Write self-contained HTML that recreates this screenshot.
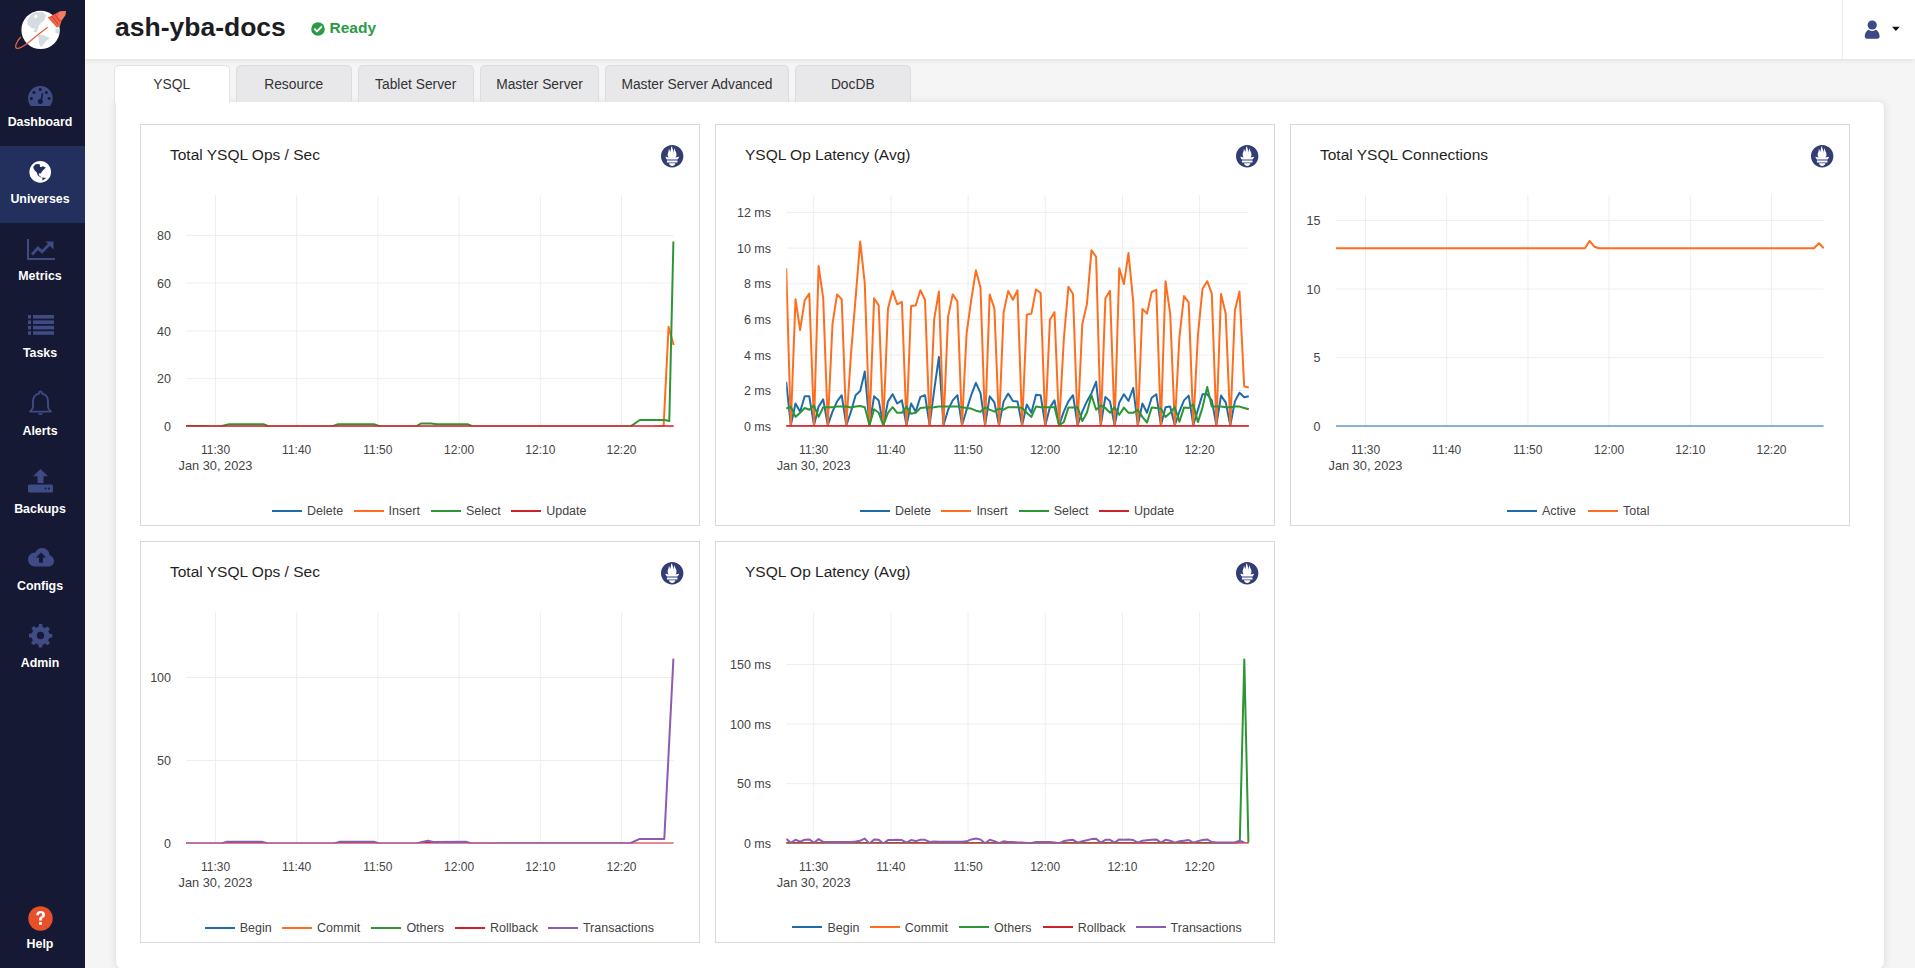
<!DOCTYPE html>
<html><head><meta charset="utf-8"><title>ash-yba-docs</title>
<style>
html,body{margin:0;padding:0;}
body{width:1915px;height:968px;overflow:hidden;position:relative;background:#f5f5f5;font-family:"Liberation Sans", sans-serif;}
#side{position:absolute;left:0;top:0;width:85px;height:968px;background:#161934;}
#side .active{position:absolute;left:0;top:146px;width:85px;height:77px;background:#23305d;}
.slabel{position:absolute;left:-45px;width:170px;text-align:center;color:#fff;font-weight:bold;font-size:12.4px;line-height:14px;}
#header{position:absolute;left:85px;top:0;width:1830px;height:59px;background:#fff;box-shadow:0 1px 6px rgba(0,0,0,0.10);}
#title{position:absolute;left:115px;top:12px;font-size:26.5px;font-weight:bold;color:#1c1c22;line-height:30px;letter-spacing:0px;}
#ready{position:absolute;left:329.5px;top:18px;font-size:15.5px;font-weight:bold;color:#2c9a45;line-height:20px;}
#divider{position:absolute;left:1842px;top:0;width:1px;height:59px;background:#ececec;}
#panel{position:absolute;left:115px;top:102px;width:1768px;height:867px;background:#fff;border:1px solid #e4e4ea;border-top:none;border-radius:0 6px 8px 8px;box-shadow:0 0 9px rgba(0,0,0,0.09);}
.tab{position:absolute;top:65px;height:37px;box-sizing:border-box;background:#e8e8eb;border:1px solid #dcdce0;border-bottom:none;border-radius:5px 5px 0 0;text-align:center;font-size:13.8px;line-height:37px;color:#333;}
.tab.active{background:#fff;border-color:#e2e2e6;height:38px;z-index:2;}
.card{position:absolute;width:558px;height:400px;border:1px solid #d9d9dd;background:#fff;}
.ctitle{position:absolute;font-size:15.5px;line-height:20px;color:#1f1f24;white-space:nowrap;}
.ytick{position:absolute;font-size:12.5px;line-height:16px;color:#444;white-space:nowrap;text-align:right;}
.xtick{position:absolute;width:80px;text-align:center;font-size:12px;line-height:16px;color:#444;white-space:nowrap;}
.lline{position:absolute;width:30px;height:2px;}
.ltext{position:absolute;font-size:12.5px;line-height:16px;color:#444;white-space:nowrap;}
svg{overflow:visible;}
</style></head><body>
<div id="side"><div class="active"></div>
<svg style="position:absolute;left:0;top:0" width="85" height="60" viewBox="0 0 85 60">
<circle cx="40.6" cy="29.9" r="19.2" fill="#fff"/>
<path d="M27 20.5L30.6 15.3 34.8 12.2 43 12.2 46.1 15.3 44.1 20.5 41 23.1 38.9 25.6 37.9 28.7 36.8 32.4 33.7 31.8 31.7 28.2 27.6 24.6Z" fill="#d5dce1"/>
<circle cx="35.8" cy="16.4" r="1.6" fill="#fff"/><circle cx="33.4" cy="29.2" r="1.2" fill="#fff"/>
<path d="M37.9 33.9L43 34.9 49.8 38 45.1 42.2 41 47.3 39.4 44.2 38.4 38.6Z" fill="#d5dce1"/>
<path d="M55.4 28.7L59 29.3 58.5 33.9 55.4 32.9Z" fill="#d5dce1"/>
<path d="M47.7 17.4L54.4 14.3 59.6 11.5 66 10.9 65.2 15.3 61.6 20.5 60.1 25.7 57 27.7Z" fill="#ec6347"/>
<path d="M59.6 11.5L66 10.9 65.2 15.3 61.6 20.5 57.5 16.5Z" fill="#f27d63"/>
<path d="M51.5 16l6.5 8.2M54.5 14.2l5.6 7.4" stroke="#d94b30" stroke-width="1.1" fill="none"/>
<path d="M47.7 27.2C41 32 33 38.5 27.6 43.2 23 46.5 19 48.8 17 48.4 14.2 47.8 16 42 20.8 37" stroke="#e8603f" stroke-width="1.3" fill="none"/>
</svg>
<div class="slabel" style="top:115.3px">Dashboard</div><svg style="position:absolute;left:27px;top:85px" width="27" height="23" viewBox="0 0 27 23"><path d="M3.65 20.9A12.35 12.35 0 1 1 23.05 20.9Z" fill="#3f4b84"/><circle cx="13.2" cy="4.6" r="1.5" fill="#161934"/><circle cx="7" cy="7.4" r="1.5" fill="#161934"/><circle cx="19.4" cy="7.4" r="1.5" fill="#161934"/><circle cx="4.4" cy="13.6" r="1.5" fill="#161934"/><circle cx="22.2" cy="13.6" r="1.5" fill="#161934"/><path d="M14.8 8.2l1.5.3-1.6 8.6-1.6-.3z" fill="#161934"/><circle cx="13.3" cy="16.6" r="2.5" fill="#161934"/></svg><div class="slabel" style="top:192.3px">Universes</div><svg style="position:absolute;left:29px;top:160px" width="23" height="23" viewBox="0 0 23 23"><circle cx="11.2" cy="11.9" r="10.8" fill="#fff"/><path d="M4.2 7.1L6.5 4.3 10.3 4 10.9 5.2 12.1 7.1 13.7 6.2 16.8 7.4 14.9 9.6 12.7 11.7 12.1 13.6 10.5 13.3 9.6 14.2 10.6 16.1 12.7 17.3 11.8 17.5 8.8 15.4 7.8 12.4 5.3 9.9Z" fill="#23305d"/><circle cx="11.8" cy="6" r="1" fill="#fff"/><path d="M13.2 17.6L17.1 18 13.6 20.6Z" fill="#23305d"/></svg><div class="slabel" style="top:269.3px">Metrics</div><svg style="position:absolute;left:27px;top:238px" width="29" height="22" viewBox="0 0 29 22"><path d="M1 1v20h27" fill="none" stroke="#3f4b84" stroke-width="2"/><path d="M5 16.5l6-6.5 4 3.8 8-8" fill="none" stroke="#3f4b84" stroke-width="2.8"/><path d="M18.5 3.5h8v8z" fill="#3f4b84"/></svg><div class="slabel" style="top:346.2px">Tasks</div><svg style="position:absolute;left:27.5px;top:315px" width="26" height="20" viewBox="0 0 26 20"><rect x="0" y="0" width="3" height="3.6" fill="#3f4b84"/><rect x="5" y="0" width="21" height="3.6" fill="#3f4b84"/><rect x="0" y="5.4" width="3" height="3.6" fill="#3f4b84"/><rect x="5" y="5.4" width="21" height="3.6" fill="#3f4b84"/><rect x="0" y="10.8" width="3" height="3.6" fill="#3f4b84"/><rect x="5" y="10.8" width="21" height="3.6" fill="#3f4b84"/><rect x="0" y="16.2" width="3" height="3.6" fill="#3f4b84"/><rect x="5" y="16.2" width="21" height="3.6" fill="#3f4b84"/></svg><div class="slabel" style="top:423.6px">Alerts</div><svg style="position:absolute;left:28px;top:390px" width="25" height="27" viewBox="0 0 25 27"><path d="M12.5 1.5c-.9 0-1.5.6-1.5 1.5v.6C7.3 4.4 5 7.5 5 11.3v5.4c0 1.6-1.2 3.3-3 4.9h21c-1.8-1.6-3-3.3-3-4.9v-5.4c0-3.8-2.3-6.9-6-7.7V3c0-.9-.6-1.5-1.5-1.5z" fill="none" stroke="#3f4b84" stroke-width="1.9" stroke-linejoin="round"/><path d="M10 23.2a2.6 2.6 0 0 0 5 0z" fill="#3f4b84"/></svg><div class="slabel" style="top:501.8px">Backups</div><svg style="position:absolute;left:28px;top:469px" width="25" height="24" viewBox="0 0 25 24"><path d="M12.5 0l7.5 7.2h-4.5v6.8h-6V7.2H5z" fill="#3f4b84"/><rect x="0" y="15.5" width="25" height="8" rx="1.5" fill="#3f4b84"/><circle cx="17.5" cy="19.5" r=".9" fill="#161934"/><circle cx="20.8" cy="19.5" r=".9" fill="#161934"/></svg><div class="slabel" style="top:578.6px">Configs</div><svg style="position:absolute;left:26.5px;top:547px" width="28" height="20" viewBox="0 0 28 20"><path d="M22.6 8.3C22.4 3.9 19.2 1 15.2 1c-3.1 0-5.7 1.8-6.8 4.4C4.5 5.3 1 8.3 1 12.3 1 16.5 4.1 19.5 8 19.5h13.6c3 0 5.4-2.4 5.4-5.5 0-2.7-1.9-5.2-4.4-5.7z" fill="#3f4b84"/><path d="M14 5.5l5 5h-3.1v5.2h-3.8v-5.2H9z" fill="#161934"/></svg><div class="slabel" style="top:655.6px">Admin</div><svg style="position:absolute;left:29px;top:624px" width="23" height="23" viewBox="0 0 24 24"><path d="M10.3 0h3.4l.6 3.2c.9.3 1.7.6 2.4 1.1l2.7-1.8 2.4 2.4-1.8 2.7c.5.7.9 1.6 1.1 2.4l3.2.6v3.4l-3.2.6c-.3.9-.6 1.7-1.1 2.4l1.8 2.7-2.4 2.4-2.7-1.8c-.7.5-1.6.9-2.4 1.1l-.6 3.2h-3.4l-.6-3.2c-.9-.3-1.7-.6-2.4-1.1l-2.7 1.8-2.4-2.4 1.8-2.7c-.5-.7-.9-1.6-1.1-2.4L0 13.7v-3.4l3.2-.6c.3-.9.6-1.7 1.1-2.4L2.5 4.6l2.4-2.4 2.7 1.8c.7-.5 1.6-.9 2.4-1.1z" fill="#3f4b84"/><circle cx="12" cy="12" r="3.8" fill="#161934"/></svg>
<svg style="position:absolute;left:27.5px;top:905.5px" width="25" height="25" viewBox="0 0 25 25">
<circle cx="12.5" cy="12.5" r="12.2" fill="#e8502a"/>
<path d="M8.3 9.2c0-2.6 1.8-4.2 4.3-4.2 2.6 0 4.4 1.5 4.4 3.8 0 1.7-.9 2.5-2.1 3.3-.8.5-1.1.9-1.1 1.7v.6h-2.7v-.8c0-1.5.5-2.3 1.7-3.1.9-.6 1.4-1 1.4-1.8 0-.9-.7-1.4-1.6-1.4-1 0-1.6.7-1.6 1.9z" fill="#fff"/>
<rect x="11.1" y="16" width="2.8" height="2.8" fill="#fff"/>
</svg>
<div class="slabel" style="top:937px">Help</div>
</div>
<div id="header"></div>
<div id="title">ash-yba-docs</div>
<svg style="position:absolute;left:310.5px;top:21.5px" width="14" height="14" viewBox="0 0 14 14">
<circle cx="7" cy="7" r="6.8" fill="#2c9a45"/>
<path d="M3.8 7.2l2.2 2.2 4.3-4.4" stroke="#fff" stroke-width="1.9" fill="none" stroke-linecap="round" stroke-linejoin="round"/>
</svg>
<div id="ready">Ready</div>
<div id="divider"></div>
<svg style="position:absolute;left:1863px;top:19px" width="40" height="22" viewBox="0 0 40 22">
<circle cx="9.2" cy="6" r="4.6" fill="#3a4a84"/>
<path d="M1.8 17.5c0-3.7 2.1-6.3 4-6.8 1 .8 2.1 1.2 3.4 1.2s2.4-.4 3.4-1.2c1.9.5 4 3.1 4 6.8 0 1.4-.8 2.2-2.2 2.2H4c-1.4 0-2.2-.8-2.2-2.2z" fill="#3a4a84"/>
<path d="M29 7.8h7.8l-3.9 4.3z" fill="#111"/>
</svg>
<div id="panel"></div>
<div class="tab active" style="left:114px;width:115.5px">YSQL</div><div class="tab" style="left:236px;width:115.5px">Resource</div><div class="tab" style="left:358px;width:115.5px">Tablet Server</div><div class="tab" style="left:480px;width:119px">Master Server</div><div class="tab" style="left:605px;width:184px">Master Server Advanced</div><div class="tab" style="left:795px;width:115.5px">DocDB</div>
<div class="card" style="left:140px;top:124px"></div>
<div class="ctitle" style="left:170px;top:144.8px">Total YSQL Ops / Sec</div>
<svg style="position:absolute;left:660.8px;top:144.8px" width="22.4" height="22.4" viewBox="0 0 24 24"><path fill="#323d74" d="M12 0C5.373 0 0 5.372 0 12c0 6.627 5.373 12 12 12s12-5.373 12-12c0-6.628-5.373-12-12-12zm0 22.46c-1.885 0-3.414-1.26-3.414-2.814h6.828c0 1.553-1.528 2.813-3.414 2.813zm5.64-3.745H6.36v-2.046h11.28v2.046zm-.04-3.098H6.391c-.037-.043-.075-.086-.111-.13-1.155-1.401-1.427-2.133-1.69-2.879-.005-.025 1.4.287 2.395.511 0 0 .513.119 1.262.255-.72-.843-1.147-1.915-1.147-3.01 0-2.406 1.845-4.508 1.18-6.207.648.052 1.34 1.367 1.387 3.422.689-.951.977-2.69.977-3.755 0-1.103.727-2.385 1.454-2.429-.648 1.069.168 1.984.894 4.256.272.854.237 2.29.447 3.201.07-1.892.395-4.652 1.595-5.605-.529 1.2.079 2.702.494 3.424.671 1.164 1.078 2.047 1.078 3.716a4.642 4.642 0 01-1.11 2.996c.792-.149 1.34-.283 1.34-.283l2.573-.502s-.374 1.538-1.81 3.019z"/></svg>
<svg class="plot" width="1915" height="968" style="position:absolute;left:0;top:0">
<line x1="215.5" y1="195" x2="215.5" y2="426.4" stroke="#eeeeee" stroke-width="1"/>
<line x1="296.7" y1="195" x2="296.7" y2="426.4" stroke="#eeeeee" stroke-width="1"/>
<line x1="377.9" y1="195" x2="377.9" y2="426.4" stroke="#eeeeee" stroke-width="1"/>
<line x1="459.1" y1="195" x2="459.1" y2="426.4" stroke="#eeeeee" stroke-width="1"/>
<line x1="540.3" y1="195" x2="540.3" y2="426.4" stroke="#eeeeee" stroke-width="1"/>
<line x1="621.5" y1="195" x2="621.5" y2="426.4" stroke="#eeeeee" stroke-width="1"/>
<line x1="186" y1="426.4" x2="673.6" y2="426.4" stroke="#eeeeee" stroke-width="1"/>
<line x1="186" y1="378.6" x2="673.6" y2="378.6" stroke="#eeeeee" stroke-width="1"/>
<line x1="186" y1="330.9" x2="673.6" y2="330.9" stroke="#eeeeee" stroke-width="1"/>
<line x1="186" y1="283.1" x2="673.6" y2="283.1" stroke="#eeeeee" stroke-width="1"/>
<line x1="186" y1="235.4" x2="673.6" y2="235.4" stroke="#eeeeee" stroke-width="1"/>
<defs><clipPath id="clip140_124"><rect x="186" y="155" width="489.6" height="271.5"/></clipPath></defs><g clip-path="url(#clip140_124)">
<polyline points="655,426.4 663.6,426.4 668.6,326.8 673.6,345" fill="none" stroke="#ff6e1e" stroke-width="2" stroke-linejoin="round" stroke-linecap="butt"/>
<polyline points="186,426.1 205,426.1 210,426.4 220,426.4 229,424.3 264,424.3 269,426.4 332,426.4 338,424.3 374,424.3 380,426.4 416,426.4 421,423.5 431,423.5 437,424.3 468,424.3 473,426.4 630.7,426.4 639.8,420 664.8,420 669.3,421 673.4,241.6" fill="none" stroke="#2b9633" stroke-width="2" stroke-linejoin="round" stroke-linecap="butt"/>
<polyline points="186,426.4 673.6,426.4" fill="none" stroke="#d0202a" stroke-width="2" stroke-linejoin="round" stroke-linecap="butt"/>
<polyline points="186,426.4 673.6,426.4" fill="none" stroke="#d0202a" stroke-width="2" stroke-linejoin="round" stroke-linecap="butt"/>
</g>
</svg>
<div class="ytick" style="right:1744px;top:419px">0</div>
<div class="ytick" style="right:1744px;top:371.2px">20</div>
<div class="ytick" style="right:1744px;top:323.5px">40</div>
<div class="ytick" style="right:1744px;top:275.8px">60</div>
<div class="ytick" style="right:1744px;top:228px">80</div>
<div class="xtick" style="left:175.5px;top:441.9px">11:30</div>
<div class="xtick" style="left:256.7px;top:441.9px">11:40</div>
<div class="xtick" style="left:337.9px;top:441.9px">11:50</div>
<div class="xtick" style="left:419.1px;top:441.9px">12:00</div>
<div class="xtick" style="left:500.3px;top:441.9px">12:10</div>
<div class="xtick" style="left:581.5px;top:441.9px">12:20</div>
<div class="xtick" style="left:165.5px;width:100px;top:457.9px;font-size:12.8px">Jan 30, 2023</div>
<div class="lline" style="left:272.1px;top:509.5px;background:#1f6cab"></div>
<div class="ltext" style="left:307.1px;top:502.6px">Delete</div>
<div class="lline" style="left:353.6px;top:509.5px;background:#ff6e1e"></div>
<div class="ltext" style="left:388.6px;top:502.6px">Insert</div>
<div class="lline" style="left:430.9px;top:509.5px;background:#2b9633"></div>
<div class="ltext" style="left:465.9px;top:502.6px">Select</div>
<div class="lline" style="left:511.2px;top:509.5px;background:#d0202a"></div>
<div class="ltext" style="left:546.2px;top:502.6px">Update</div><div class="card" style="left:715px;top:124px"></div>
<div class="ctitle" style="left:745px;top:144.8px">YSQL Op Latency (Avg)</div>
<svg style="position:absolute;left:1235.8px;top:144.8px" width="22.4" height="22.4" viewBox="0 0 24 24"><path fill="#323d74" d="M12 0C5.373 0 0 5.372 0 12c0 6.627 5.373 12 12 12s12-5.373 12-12c0-6.628-5.373-12-12-12zm0 22.46c-1.885 0-3.414-1.26-3.414-2.814h6.828c0 1.553-1.528 2.813-3.414 2.813zm5.64-3.745H6.36v-2.046h11.28v2.046zm-.04-3.098H6.391c-.037-.043-.075-.086-.111-.13-1.155-1.401-1.427-2.133-1.69-2.879-.005-.025 1.4.287 2.395.511 0 0 .513.119 1.262.255-.72-.843-1.147-1.915-1.147-3.01 0-2.406 1.845-4.508 1.18-6.207.648.052 1.34 1.367 1.387 3.422.689-.951.977-2.69.977-3.755 0-1.103.727-2.385 1.454-2.429-.648 1.069.168 1.984.894 4.256.272.854.237 2.29.447 3.201.07-1.892.395-4.652 1.595-5.605-.529 1.2.079 2.702.494 3.424.671 1.164 1.078 2.047 1.078 3.716a4.642 4.642 0 01-1.11 2.996c.792-.149 1.34-.283 1.34-.283l2.573-.502s-.374 1.538-1.81 3.019z"/></svg>
<svg class="plot" width="1915" height="968" style="position:absolute;left:0;top:0">
<line x1="813.7" y1="195" x2="813.7" y2="426.4" stroke="#eeeeee" stroke-width="1"/>
<line x1="890.9" y1="195" x2="890.9" y2="426.4" stroke="#eeeeee" stroke-width="1"/>
<line x1="968.1" y1="195" x2="968.1" y2="426.4" stroke="#eeeeee" stroke-width="1"/>
<line x1="1045.2" y1="195" x2="1045.2" y2="426.4" stroke="#eeeeee" stroke-width="1"/>
<line x1="1122.4" y1="195" x2="1122.4" y2="426.4" stroke="#eeeeee" stroke-width="1"/>
<line x1="1199.6" y1="195" x2="1199.6" y2="426.4" stroke="#eeeeee" stroke-width="1"/>
<line x1="786.2" y1="426.4" x2="1248.8" y2="426.4" stroke="#eeeeee" stroke-width="1"/>
<line x1="786.2" y1="390.7" x2="1248.8" y2="390.7" stroke="#eeeeee" stroke-width="1"/>
<line x1="786.2" y1="355.1" x2="1248.8" y2="355.1" stroke="#eeeeee" stroke-width="1"/>
<line x1="786.2" y1="319.4" x2="1248.8" y2="319.4" stroke="#eeeeee" stroke-width="1"/>
<line x1="786.2" y1="283.8" x2="1248.8" y2="283.8" stroke="#eeeeee" stroke-width="1"/>
<line x1="786.2" y1="248.1" x2="1248.8" y2="248.1" stroke="#eeeeee" stroke-width="1"/>
<line x1="786.2" y1="212.4" x2="1248.8" y2="212.4" stroke="#eeeeee" stroke-width="1"/>
<defs><clipPath id="clip715_124"><rect x="786.2" y="155" width="464.6" height="271.5"/></clipPath></defs><g clip-path="url(#clip715_124)">
<polyline points="786.2,381.8 790.8,425.2 795.5,403.5 800.1,411.7 804.7,396.3 809.3,396.3 814,425.2 818.6,406.6 823.2,399.4 827.8,425.2 832.5,411.7 837.1,401.4 841.7,395.2 846.3,425.2 851,411.7 855.6,395.2 860.2,391.1 864.8,371.5 869.5,425.2 874.1,396.3 878.7,400.4 883.3,425.2 888,401.4 892.6,394.2 897.2,403.5 901.9,400.4 906.5,425.2 911.1,403.5 915.7,411.7 920.4,396.9 925,395.2 929.6,425.2 934.2,390.1 938.9,357 943.5,425.2 948.1,409.7 952.7,400.4 957.4,395.2 962,425.2 966.6,409.7 971.2,395.2 975.9,382.8 980.5,393.2 985.1,425.2 989.7,396.3 994.4,402.4 999,425.2 1003.6,401.4 1008.2,393.6 1012.9,401 1017.5,401.4 1022.1,425.2 1026.8,404.5 1031.4,412.8 1036,394.8 1040.6,395.2 1045.3,425.2 1049.9,407.6 1054.5,400.4 1059.1,425.2 1063.8,411.7 1068.4,401.4 1073,395.2 1077.6,425.2 1082.3,411.7 1086.9,401.4 1091.5,393.2 1096.1,381.8 1100.8,425.2 1105.4,396.9 1110,401.4 1114.6,425.2 1119.3,402.4 1123.9,394.2 1128.5,401 1133.2,388 1137.8,425.2 1142.4,403.5 1147,412.8 1151.7,397.7 1156.3,394.2 1160.9,425.2 1165.5,407.2 1170.2,406.6 1174.8,425.2 1179.4,411.7 1184,400.4 1188.7,395.6 1193.3,425.2 1197.9,409.7 1202.5,394.2 1207.2,394.2 1211.8,400.4 1216.4,425.2 1221,395.6 1225.7,402.4 1230.3,425.2 1234.9,401.4 1239.5,392.7 1244.2,397.3 1248.8,396.3" fill="none" stroke="#1f6cab" stroke-width="2" stroke-linejoin="round" stroke-linecap="butt"/>
<polyline points="786.2,268.2 790.8,425.2 795.5,299.2 800.1,330.2 804.7,300.2 809.3,293.6 814,425.2 818.6,266.1 823.2,298.2 827.8,425.2 832.5,324 837.1,294.4 841.7,299.2 846.3,425.2 851,353.9 855.6,298.2 860.2,241.4 864.8,283.7 869.5,425.2 874.1,298.2 878.7,305.4 883.3,425.2 888,308.5 892.6,290.9 897.2,304.3 901.9,301.9 906.5,425.2 911.1,306 915.7,305.4 920.4,290.3 925,299.8 929.6,425.2 934.2,318.8 938.9,291.5 943.5,425.2 948.1,316.7 952.7,294.4 957.4,301.3 962,425.2 966.6,333.3 971.2,300.2 975.9,270.3 980.5,287.8 985.1,425.2 989.7,294.4 994.4,308.5 999,425.2 1003.6,312.6 1008.2,290.9 1012.9,299.8 1017.5,290.3 1022.1,425.2 1026.8,314.7 1031.4,313.6 1036,289.5 1040.6,293 1045.3,425.2 1049.9,319.8 1054.5,312.2 1059.1,425.2 1063.8,339.5 1068.4,286.8 1073,294 1077.6,425.2 1082.3,324 1086.9,304.3 1091.5,250.2 1096.1,256.8 1100.8,425.2 1105.4,298.2 1110,290.9 1114.6,425.2 1119.3,268.2 1123.9,284.1 1128.5,253.1 1133.2,301.3 1137.8,425.2 1142.4,308.9 1147,313.6 1151.7,292 1156.3,289.9 1160.9,425.2 1165.5,281.2 1170.2,313.6 1174.8,425.2 1179.4,337.4 1184,296.1 1188.7,302.3 1193.3,425.2 1197.9,335.3 1202.5,288.9 1207.2,281.2 1211.8,293.6 1216.4,425.2 1221,294 1225.7,313.6 1230.3,425.2 1234.9,310.5 1239.5,291.5 1244.2,386.5 1248.8,387.4" fill="none" stroke="#ff6e1e" stroke-width="2" stroke-linejoin="round" stroke-linecap="butt"/>
<polyline points="786.2,408.6 790.8,406.6 795.5,416.9 800.1,412.8 804.7,408 809.3,409.7 814,405.5 818.6,416.9 823.2,407.2 827.8,407.2 832.5,407.2 837.1,406.6 841.7,406.6 846.3,406.6 851,407.6 855.6,406.6 860.2,406 864.8,407.2 869.5,425.2 874.1,409.3 878.7,412.8 883.3,425.2 888,412.8 892.6,407.2 897.2,412.8 901.9,412.8 906.5,406.6 911.1,413.8 915.7,412.8 920.4,408 925,407.6 929.6,407.6 934.2,407.2 938.9,406.6 943.5,406.6 948.1,406.6 952.7,406.6 957.4,406.6 962,407.2 966.6,408 971.2,408.6 975.9,410.7 980.5,411.7 985.1,407.6 989.7,409.7 994.4,411.7 999,408.6 1003.6,409.7 1008.2,407.2 1012.9,407.2 1017.5,407.2 1022.1,408 1026.8,412.8 1031.4,416.9 1036,406.6 1040.6,407.2 1045.3,407.2 1049.9,407.2 1054.5,407.2 1059.1,425.2 1063.8,422.1 1068.4,407.6 1073,407.6 1077.6,407.2 1082.3,421 1086.9,412.8 1091.5,395.2 1096.1,409.7 1100.8,405.5 1105.4,408 1110,412.8 1114.6,407.2 1119.3,414.8 1123.9,407.6 1128.5,412.8 1133.2,412.8 1137.8,409.7 1142.4,416.9 1147,422.5 1151.7,407.6 1156.3,408 1160.9,408.6 1165.5,416.9 1170.2,412.8 1174.8,407.2 1179.4,421.7 1184,407.6 1188.7,408 1193.3,404.5 1197.9,422.1 1202.5,407.6 1207.2,387 1211.8,406.6 1216.4,406.6 1221,406.6 1225.7,407.2 1230.3,407.2 1234.9,406.6 1239.5,406.6 1244.2,408 1248.8,409.3" fill="none" stroke="#2b9633" stroke-width="2" stroke-linejoin="round" stroke-linecap="butt"/>
<polyline points="786.2,426.2 1248.8,426.2" fill="none" stroke="#d0202a" stroke-width="2" stroke-linejoin="round" stroke-linecap="butt"/>
<polyline points="786.2,426.2 1248.8,426.2" fill="none" stroke="#d0202a" stroke-width="2" stroke-linejoin="round" stroke-linecap="butt"/>
</g>
</svg>
<div class="ytick" style="right:1144px;top:419px">0 ms</div>
<div class="ytick" style="right:1144px;top:383.3px">2 ms</div>
<div class="ytick" style="right:1144px;top:347.7px">4 ms</div>
<div class="ytick" style="right:1144px;top:312px">6 ms</div>
<div class="ytick" style="right:1144px;top:276.4px">8 ms</div>
<div class="ytick" style="right:1144px;top:240.7px">10 ms</div>
<div class="ytick" style="right:1144px;top:205px">12 ms</div>
<div class="xtick" style="left:773.7px;top:441.9px">11:30</div>
<div class="xtick" style="left:850.9px;top:441.9px">11:40</div>
<div class="xtick" style="left:928.1px;top:441.9px">11:50</div>
<div class="xtick" style="left:1005.2px;top:441.9px">12:00</div>
<div class="xtick" style="left:1082.4px;top:441.9px">12:10</div>
<div class="xtick" style="left:1159.6px;top:441.9px">12:20</div>
<div class="xtick" style="left:763.7px;width:100px;top:457.9px;font-size:12.8px">Jan 30, 2023</div>
<div class="lline" style="left:859.9px;top:509.5px;background:#1f6cab"></div>
<div class="ltext" style="left:894.9px;top:502.6px">Delete</div>
<div class="lline" style="left:941.4px;top:509.5px;background:#ff6e1e"></div>
<div class="ltext" style="left:976.4px;top:502.6px">Insert</div>
<div class="lline" style="left:1018.6px;top:509.5px;background:#2b9633"></div>
<div class="ltext" style="left:1053.7px;top:502.6px">Select</div>
<div class="lline" style="left:1099px;top:509.5px;background:#d0202a"></div>
<div class="ltext" style="left:1134px;top:502.6px">Update</div><div class="card" style="left:1290px;top:124px"></div>
<div class="ctitle" style="left:1320px;top:144.8px">Total YSQL Connections</div>
<svg style="position:absolute;left:1810.8px;top:144.8px" width="22.4" height="22.4" viewBox="0 0 24 24"><path fill="#323d74" d="M12 0C5.373 0 0 5.372 0 12c0 6.627 5.373 12 12 12s12-5.373 12-12c0-6.628-5.373-12-12-12zm0 22.46c-1.885 0-3.414-1.26-3.414-2.814h6.828c0 1.553-1.528 2.813-3.414 2.813zm5.64-3.745H6.36v-2.046h11.28v2.046zm-.04-3.098H6.391c-.037-.043-.075-.086-.111-.13-1.155-1.401-1.427-2.133-1.69-2.879-.005-.025 1.4.287 2.395.511 0 0 .513.119 1.262.255-.72-.843-1.147-1.915-1.147-3.01 0-2.406 1.845-4.508 1.18-6.207.648.052 1.34 1.367 1.387 3.422.689-.951.977-2.69.977-3.755 0-1.103.727-2.385 1.454-2.429-.648 1.069.168 1.984.894 4.256.272.854.237 2.29.447 3.201.07-1.892.395-4.652 1.595-5.605-.529 1.2.079 2.702.494 3.424.671 1.164 1.078 2.047 1.078 3.716a4.642 4.642 0 01-1.11 2.996c.792-.149 1.34-.283 1.34-.283l2.573-.502s-.374 1.538-1.81 3.019z"/></svg>
<svg class="plot" width="1915" height="968" style="position:absolute;left:0;top:0">
<line x1="1365.5" y1="195" x2="1365.5" y2="426.4" stroke="#eeeeee" stroke-width="1"/>
<line x1="1446.7" y1="195" x2="1446.7" y2="426.4" stroke="#eeeeee" stroke-width="1"/>
<line x1="1527.9" y1="195" x2="1527.9" y2="426.4" stroke="#eeeeee" stroke-width="1"/>
<line x1="1609.1" y1="195" x2="1609.1" y2="426.4" stroke="#eeeeee" stroke-width="1"/>
<line x1="1690.3" y1="195" x2="1690.3" y2="426.4" stroke="#eeeeee" stroke-width="1"/>
<line x1="1771.5" y1="195" x2="1771.5" y2="426.4" stroke="#eeeeee" stroke-width="1"/>
<line x1="1336" y1="426.4" x2="1823.6" y2="426.4" stroke="#eeeeee" stroke-width="1"/>
<line x1="1336" y1="357.7" x2="1823.6" y2="357.7" stroke="#eeeeee" stroke-width="1"/>
<line x1="1336" y1="289.1" x2="1823.6" y2="289.1" stroke="#eeeeee" stroke-width="1"/>
<line x1="1336" y1="220.4" x2="1823.6" y2="220.4" stroke="#eeeeee" stroke-width="1"/>
<defs><clipPath id="clip1290_124"><rect x="1336" y="155" width="489.6" height="271.5"/></clipPath></defs><g clip-path="url(#clip1290_124)">
<polyline points="1336,426.4 1823.6,426.4" fill="none" stroke="#1f6cab" stroke-width="2" stroke-linejoin="round" stroke-linecap="butt"/>
<polyline points="1336,248.2 1585,248.2 1589.5,240.9 1594.5,246.8 1599,248.2 1814,248.2 1819,243.2 1823.6,248.2" fill="none" stroke="#ff6e1e" stroke-width="2" stroke-linejoin="round" stroke-linecap="butt"/>
</g>
</svg>
<div class="ytick" style="right:594.5px;top:419px">0</div>
<div class="ytick" style="right:594.5px;top:350.3px">5</div>
<div class="ytick" style="right:594.5px;top:281.7px">10</div>
<div class="ytick" style="right:594.5px;top:213px">15</div>
<div class="xtick" style="left:1325.5px;top:441.9px">11:30</div>
<div class="xtick" style="left:1406.7px;top:441.9px">11:40</div>
<div class="xtick" style="left:1487.9px;top:441.9px">11:50</div>
<div class="xtick" style="left:1569.1px;top:441.9px">12:00</div>
<div class="xtick" style="left:1650.3px;top:441.9px">12:10</div>
<div class="xtick" style="left:1731.5px;top:441.9px">12:20</div>
<div class="xtick" style="left:1315.5px;width:100px;top:457.9px;font-size:12.8px">Jan 30, 2023</div>
<div class="lline" style="left:1507px;top:509.5px;background:#1f6cab"></div>
<div class="ltext" style="left:1542px;top:502.6px">Active</div>
<div class="lline" style="left:1588px;top:509.5px;background:#ff6e1e"></div>
<div class="ltext" style="left:1623px;top:502.6px">Total</div><div class="card" style="left:140px;top:541px"></div>
<div class="ctitle" style="left:170px;top:561.8px">Total YSQL Ops / Sec</div>
<svg style="position:absolute;left:660.8px;top:561.8px" width="22.4" height="22.4" viewBox="0 0 24 24"><path fill="#323d74" d="M12 0C5.373 0 0 5.372 0 12c0 6.627 5.373 12 12 12s12-5.373 12-12c0-6.628-5.373-12-12-12zm0 22.46c-1.885 0-3.414-1.26-3.414-2.814h6.828c0 1.553-1.528 2.813-3.414 2.813zm5.64-3.745H6.36v-2.046h11.28v2.046zm-.04-3.098H6.391c-.037-.043-.075-.086-.111-.13-1.155-1.401-1.427-2.133-1.69-2.879-.005-.025 1.4.287 2.395.511 0 0 .513.119 1.262.255-.72-.843-1.147-1.915-1.147-3.01 0-2.406 1.845-4.508 1.18-6.207.648.052 1.34 1.367 1.387 3.422.689-.951.977-2.69.977-3.755 0-1.103.727-2.385 1.454-2.429-.648 1.069.168 1.984.894 4.256.272.854.237 2.29.447 3.201.07-1.892.395-4.652 1.595-5.605-.529 1.2.079 2.702.494 3.424.671 1.164 1.078 2.047 1.078 3.716a4.642 4.642 0 01-1.11 2.996c.792-.149 1.34-.283 1.34-.283l2.573-.502s-.374 1.538-1.81 3.019z"/></svg>
<svg class="plot" width="1915" height="968" style="position:absolute;left:0;top:0">
<line x1="215.5" y1="612" x2="215.5" y2="843.4" stroke="#eeeeee" stroke-width="1"/>
<line x1="296.7" y1="612" x2="296.7" y2="843.4" stroke="#eeeeee" stroke-width="1"/>
<line x1="377.9" y1="612" x2="377.9" y2="843.4" stroke="#eeeeee" stroke-width="1"/>
<line x1="459.1" y1="612" x2="459.1" y2="843.4" stroke="#eeeeee" stroke-width="1"/>
<line x1="540.3" y1="612" x2="540.3" y2="843.4" stroke="#eeeeee" stroke-width="1"/>
<line x1="621.5" y1="612" x2="621.5" y2="843.4" stroke="#eeeeee" stroke-width="1"/>
<line x1="186" y1="843.4" x2="673.6" y2="843.4" stroke="#eeeeee" stroke-width="1"/>
<line x1="186" y1="760.5" x2="673.6" y2="760.5" stroke="#eeeeee" stroke-width="1"/>
<line x1="186" y1="677.5" x2="673.6" y2="677.5" stroke="#eeeeee" stroke-width="1"/>
<defs><clipPath id="clip140_541"><rect x="186" y="572" width="489.6" height="271.5"/></clipPath></defs><g clip-path="url(#clip140_541)">
<polyline points="186,843.4 221,843.4 226,842.9 262,842.9 267,843.4 334,843.4 338,842.9 374,842.9 379,843.4 416,843.4 420,842.9 466,842.9 471,843.4 673.6,843.4" fill="none" stroke="#d0202a" stroke-width="2" stroke-linejoin="round" stroke-linecap="butt"/>
<polyline points="186,843.4 215,843.4 221.5,843.4 227,841.8 262,841.8 267.7,843.4 334.3,843.4 340,841.8 374,841.8 379,843.4 416.6,843.4 422,842 428,840.8 433,842 466,841.8 471.4,843.4 630.7,843 639.8,838.9 664.3,838.9 673.4,658.6" fill="none" stroke="#8b5db1" stroke-width="2" stroke-linejoin="round" stroke-linecap="butt"/>
</g>
</svg>
<div class="ytick" style="right:1744px;top:836px">0</div>
<div class="ytick" style="right:1744px;top:753.1px">50</div>
<div class="ytick" style="right:1744px;top:670.1px">100</div>
<div class="xtick" style="left:175.5px;top:858.9px">11:30</div>
<div class="xtick" style="left:256.7px;top:858.9px">11:40</div>
<div class="xtick" style="left:337.9px;top:858.9px">11:50</div>
<div class="xtick" style="left:419.1px;top:858.9px">12:00</div>
<div class="xtick" style="left:500.3px;top:858.9px">12:10</div>
<div class="xtick" style="left:581.5px;top:858.9px">12:20</div>
<div class="xtick" style="left:165.5px;width:100px;top:874.9px;font-size:12.8px">Jan 30, 2023</div>
<div class="lline" style="left:204.7px;top:926.5px;background:#1f6cab"></div>
<div class="ltext" style="left:239.7px;top:919.6px">Begin</div>
<div class="lline" style="left:282.1px;top:926.5px;background:#ff6e1e"></div>
<div class="ltext" style="left:317.1px;top:919.6px">Commit</div>
<div class="lline" style="left:371.4px;top:926.5px;background:#2b9633"></div>
<div class="ltext" style="left:406.4px;top:919.6px">Others</div>
<div class="lline" style="left:455px;top:926.5px;background:#d0202a"></div>
<div class="ltext" style="left:490px;top:919.6px">Rollback</div>
<div class="lline" style="left:547.9px;top:926.5px;background:#8b5db1"></div>
<div class="ltext" style="left:582.9px;top:919.6px">Transactions</div><div class="card" style="left:715px;top:541px"></div>
<div class="ctitle" style="left:745px;top:561.8px">YSQL Op Latency (Avg)</div>
<svg style="position:absolute;left:1235.8px;top:561.8px" width="22.4" height="22.4" viewBox="0 0 24 24"><path fill="#323d74" d="M12 0C5.373 0 0 5.372 0 12c0 6.627 5.373 12 12 12s12-5.373 12-12c0-6.628-5.373-12-12-12zm0 22.46c-1.885 0-3.414-1.26-3.414-2.814h6.828c0 1.553-1.528 2.813-3.414 2.813zm5.64-3.745H6.36v-2.046h11.28v2.046zm-.04-3.098H6.391c-.037-.043-.075-.086-.111-.13-1.155-1.401-1.427-2.133-1.69-2.879-.005-.025 1.4.287 2.395.511 0 0 .513.119 1.262.255-.72-.843-1.147-1.915-1.147-3.01 0-2.406 1.845-4.508 1.18-6.207.648.052 1.34 1.367 1.387 3.422.689-.951.977-2.69.977-3.755 0-1.103.727-2.385 1.454-2.429-.648 1.069.168 1.984.894 4.256.272.854.237 2.29.447 3.201.07-1.892.395-4.652 1.595-5.605-.529 1.2.079 2.702.494 3.424.671 1.164 1.078 2.047 1.078 3.716a4.642 4.642 0 01-1.11 2.996c.792-.149 1.34-.283 1.34-.283l2.573-.502s-.374 1.538-1.81 3.019z"/></svg>
<svg class="plot" width="1915" height="968" style="position:absolute;left:0;top:0">
<line x1="813.7" y1="612" x2="813.7" y2="843.3" stroke="#eeeeee" stroke-width="1"/>
<line x1="890.9" y1="612" x2="890.9" y2="843.3" stroke="#eeeeee" stroke-width="1"/>
<line x1="968.1" y1="612" x2="968.1" y2="843.3" stroke="#eeeeee" stroke-width="1"/>
<line x1="1045.2" y1="612" x2="1045.2" y2="843.3" stroke="#eeeeee" stroke-width="1"/>
<line x1="1122.4" y1="612" x2="1122.4" y2="843.3" stroke="#eeeeee" stroke-width="1"/>
<line x1="1199.6" y1="612" x2="1199.6" y2="843.3" stroke="#eeeeee" stroke-width="1"/>
<line x1="786.2" y1="843.3" x2="1248.8" y2="843.3" stroke="#eeeeee" stroke-width="1"/>
<line x1="786.2" y1="783.7" x2="1248.8" y2="783.7" stroke="#eeeeee" stroke-width="1"/>
<line x1="786.2" y1="724.1" x2="1248.8" y2="724.1" stroke="#eeeeee" stroke-width="1"/>
<line x1="786.2" y1="664.5" x2="1248.8" y2="664.5" stroke="#eeeeee" stroke-width="1"/>
<defs><clipPath id="clip715_541"><rect x="786.2" y="572" width="464.6" height="271.4"/></clipPath></defs><g clip-path="url(#clip715_541)">
<polyline points="786.2,843.3 1235.2,843.3 1239.8,841.1 1244.3,659.4 1248.4,842.3" fill="none" stroke="#2b9633" stroke-width="2" stroke-linejoin="round" stroke-linecap="butt"/>
<polyline points="786.2,843.3 1248.8,843.3" fill="none" stroke="#d0202a" stroke-width="2" stroke-linejoin="round" stroke-linecap="butt"/>
<polyline points="786.2,838.8 790.8,842.8 795.5,839.8 800.1,841.6 804.7,839.8 809.3,839.4 814,842.8 818.6,839.1 823.2,841.9 827.8,841.9 832.5,841.9 837.1,841.9 841.7,841.9 846.3,841.9 851,841.9 855.6,841.6 860.2,840.7 864.8,838.6 869.5,843.6 874.1,839.4 878.7,839.8 883.3,843.6 888,840.1 892.6,840.1 897.2,839.8 901.9,840.1 906.5,842.6 911.1,840.1 915.7,841.1 920.4,839.8 925,839.8 929.6,841.9 934.2,841.6 938.9,841.8 943.5,841.8 948.1,841.8 952.7,841.8 957.4,841.8 962,841.8 966.6,841.3 971.2,839.4 975.9,838.6 980.5,839.4 985.1,843.2 989.7,839.8 994.4,841.1 999,843.2 1003.6,841.3 1008.2,841.9 1012.9,841.9 1017.5,842.4 1022.1,842.6 1026.8,842.9 1031.4,842.9 1036,842 1040.6,842 1045.3,842 1049.9,842 1054.5,842.4 1059.1,843.3 1063.8,841.1 1068.4,840.3 1073,839.8 1077.6,842.6 1082.3,841.3 1086.9,840.3 1091.5,839.1 1096.1,838.7 1100.8,842.6 1105.4,839.8 1110,839.8 1114.6,842.6 1119.3,839.4 1123.9,839.8 1128.5,839.4 1133.2,840 1137.8,842.6 1142.4,840.7 1147,840.3 1151.7,839.8 1156.3,839.4 1160.9,842.6 1165.5,839.8 1170.2,840.7 1174.8,842.6 1179.4,841.3 1184,840.7 1188.7,840 1193.3,842.6 1197.9,841.1 1202.5,840 1207.2,839.4 1211.8,842 1216.4,842.4 1221,842.4 1225.7,842.4 1230.3,842.4 1234.9,842.4 1239.5,840.7 1244.2,842.4" fill="none" stroke="#8b5db1" stroke-width="2" stroke-linejoin="round" stroke-linecap="butt"/>
</g>
</svg>
<div class="ytick" style="right:1144px;top:835.9px">0 ms</div>
<div class="ytick" style="right:1144px;top:776.3px">50 ms</div>
<div class="ytick" style="right:1144px;top:716.7px">100 ms</div>
<div class="ytick" style="right:1144px;top:657.1px">150 ms</div>
<div class="xtick" style="left:773.7px;top:858.8px">11:30</div>
<div class="xtick" style="left:850.9px;top:858.8px">11:40</div>
<div class="xtick" style="left:928.1px;top:858.8px">11:50</div>
<div class="xtick" style="left:1005.2px;top:858.8px">12:00</div>
<div class="xtick" style="left:1082.4px;top:858.8px">12:10</div>
<div class="xtick" style="left:1159.6px;top:858.8px">12:20</div>
<div class="xtick" style="left:763.7px;width:100px;top:874.8px;font-size:12.8px">Jan 30, 2023</div>
<div class="lline" style="left:792.4px;top:926.4px;background:#1f6cab"></div>
<div class="ltext" style="left:827.4px;top:919.5px">Begin</div>
<div class="lline" style="left:869.8px;top:926.4px;background:#ff6e1e"></div>
<div class="ltext" style="left:904.8px;top:919.5px">Commit</div>
<div class="lline" style="left:959.1px;top:926.4px;background:#2b9633"></div>
<div class="ltext" style="left:994.1px;top:919.5px">Others</div>
<div class="lline" style="left:1042.7px;top:926.4px;background:#d0202a"></div>
<div class="ltext" style="left:1077.7px;top:919.5px">Rollback</div>
<div class="lline" style="left:1135.6px;top:926.4px;background:#8b5db1"></div>
<div class="ltext" style="left:1170.6px;top:919.5px">Transactions</div>
</body></html>
